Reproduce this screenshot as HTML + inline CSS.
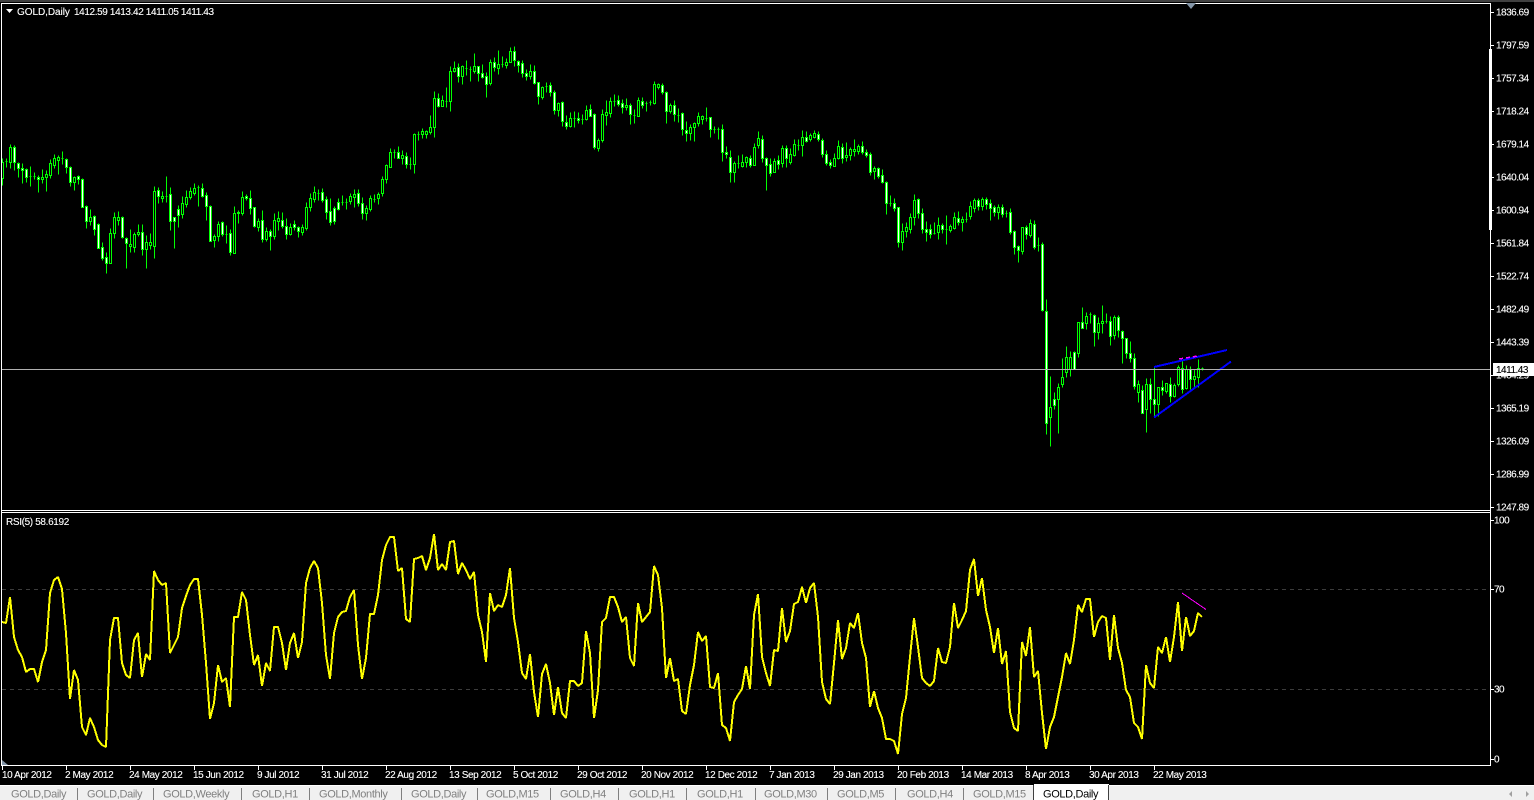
<!DOCTYPE html>
<html><head><meta charset="utf-8"><title>GOLD,Daily</title>
<style>
html,body{margin:0;padding:0;background:#000;width:1534px;height:800px;overflow:hidden}
svg{display:block}
text{font-family:"Liberation Sans",sans-serif;font-size:10px;fill:#fff;stroke:#fff;stroke-width:.12px}
.p{letter-spacing:-.5px}
.t{letter-spacing:-.4px}
.tb{font-size:11px;letter-spacing:-.35px;fill:#808080;stroke:none}
</style></head><body>
<svg width="1534" height="800" viewBox="0 0 1534 800" xmlns="http://www.w3.org/2000/svg">
<rect width="1534" height="800" fill="#000"/>
<rect width="1534" height="2" fill="#404040"/>
<!-- grid -->
<path d="M2 589.5H1490M2 689.5H1490" stroke="#3c3c3c" stroke-dasharray="4 4" fill="none"/>
<!-- candles -->
<g transform="translate(.5 .5)" fill="none" stroke="#00ff00" stroke-width="1">
<path d="M2 158V185M6 158V167M5 161h2M10 144V168M14 145V170M18 162V177M22 163V183M26 168V182M30 166V186M29 176h2M34 172V179M33 176h2M38 175V192M42 169V183M46 170V191M50 159V178M54 154V168M58 155V174M62 151V164M61 158h2M66 158V173M70 166V186M74 176V190M78 175V184M82 178V207M86 205V228M90 209V225M94 215V235M98 223V248M102 242V260M106 252V273M110 228V263M114 212V238M118 211V225M122 216V238M126 237V268M130 229V252M134 232V252M138 224V236M142 224V255M146 235V268M150 233V249M154 186V258M158 187V203M162 191V202M166 176V202M165 196h2M170 187V230M174 217V248M178 205V227M182 196V218M186 190V207M190 187V199M194 183V195M198 185V206M197 187h2M202 183V197M206 192V220M210 205V241M214 234V247M218 221V241M222 221V236M226 225V243M225 234h2M230 229V255M234 206V253M238 210V223M237 212h2M242 191V215M246 194V200M250 190V214M254 207V227M258 218V231M262 210V242M266 227V241M270 229V250M274 213V239M278 211V230M282 212V228M286 218V239M290 223V235M294 220V230M298 226V237"/>
<path d="M302 224V235M306 202V230M310 193V211M314 186V202M318 189V200M317 193h2M322 188V202M326 196V219M330 198V225M334 206V224M338 198V210M342 195V205M341 202h2M346 198V209M345 202h2M350 193V204M354 189V207M358 189V206M362 197V219M366 205V220M370 195V211M374 194V202M373 199h2M378 192V204M382 176V196M386 164V183M390 148V167M394 149V158M393 152h2M398 146V158M402 150V164M406 152V168M410 157V169M409 164h2M414 133V173M418 131V140M417 134h2M422 128V138M426 130V138M430 115V134M434 91V137M438 93V107M442 95V106M446 87V107M445 101h2M450 66V111M454 61V72M458 63V82M462 65V84M466 60V75M465 68h2M470 66V81M469 69h2M474 53V73M478 66V81M482 64V78M486 72V97M490 59V85M494 57V71M498 50V74M502 56V67M501 64h2M506 58V68M510 47V62M514 46V66M518 60V72M522 60V77M526 69V80M530 64V79M534 65V84M538 82V104M542 86V99M546 82V92M545 86h2M550 82V96M554 90V114M558 102V116M562 101V126M566 115V129M570 112V127M574 111V127M573 118h2M578 112V123M582 114V124M581 119h2M586 105V120M590 104V116M594 113V149M598 138V151M602 109V142M606 100V125M610 97V117M614 94V106M613 101h2M618 95V106M622 99V113M626 98V110M630 103V124M634 109V123M633 115h2M638 97V116M642 97V108M646 101V111M645 103h2M650 100V105M649 102h2"/>
<path d="M654 81V104M658 83V89M662 83V94M666 91V123M670 103V113M674 100V121M678 108V122M677 115h2M682 112V135M686 121V141M690 124V140M694 122V141M698 112V126M702 115V124M706 107V121M705 118h2M710 117V137M714 126V133M713 129h2M718 127V139M717 129h2M722 124V161M726 146V158M730 150V182M734 161V182M738 155V168M737 163h2M742 154V167M746 156V167M750 155V167M754 143V165M758 131V148M762 135V162M766 157V190M770 158V176M774 158V172M778 155V169M782 145V167M786 145V167M790 148V164M794 139V156M798 139V150M797 145h2M802 130V156M806 131V142M810 133V141M814 130V138M818 131V141M822 138V157M826 150V165M830 159V168M834 153V166M838 140V159M842 143V163M846 142V161M850 147V160M854 139V156M858 144V154M862 141V154M866 149V157M870 152V175M874 166V179M878 167V178M882 169V183M886 181V214M890 195V206M889 203h2M894 198V211M898 207V247M902 223V250M906 222V237M910 213V233M914 194V225M918 198V218M922 208V233M926 221V241M930 224V238M934 222V234M933 233h2M938 217V239M942 223V233M946 215V244M945 229h2M950 224V232M954 212V229M958 211V225M962 216V231M966 212V222M965 219h2M970 201V219M974 198V212M978 198V210M982 197V210M986 197V209M990 199V220M994 205V216M998 204V219M1002 204V217M1006 210V217M1005 213h2M1010 208V234M1014 230V254M1018 245V262M1022 227V254M1026 225V239M1030 219V237M1034 220V249M1038 237V251M1037 245h2M1042 242V311M1046 299V434M1050 376V446M1054 392V409M1058 383V433M1062 358V387M1066 346V377M1070 351V376M1074 351V369M1078 322V357M1082 307V328M1086 312V329M1090 312V323M1089 314h2M1094 314V346M1098 317V339M1102 305V333M1106 313V323M1105 321h2M1110 316V345M1114 315V339M1118 315V337M1122 330V363M1126 338V358M1130 341V362M1134 353V389M1138 380V402M1142 385V413M1146 378V432M1150 378V413M1154 367V417M1158 387V416M1162 380V395M1166 383V393M1170 377V402M1174 383V397M1178 365V386M1182 361V393M1186 365V389M1190 366V389M1194 369V387M1198 359V387M1202 367V370M1201 368h2"/>
<!-- bull bodies -->
<path fill="#000" d="M1 162h2V178h-2zM9 147h2V162h-2zM41 177h2V179h-2zM45 174h2V177h-2zM49 163h2V175h-2zM53 158h2V165h-2zM57 157h2V160h-2zM73 177h2V182h-2zM89 217h2V221h-2zM109 233h2V263h-2zM113 217h2V233h-2zM117 217h2V220h-2zM129 244h2V246h-2zM133 234h2V247h-2zM137 232h2V234h-2zM145 242h2V249h-2zM149 242h2V245h-2zM153 191h2V246h-2zM161 196h2V198h-2zM181 203h2V214h-2zM185 197h2V204h-2zM189 191h2V197h-2zM193 188h2V193h-2zM213 236h2V240h-2zM217 224h2V236h-2zM233 213h2V253h-2zM237 212h2V213h-2zM241 197h2V213h-2zM257 221h2V227h-2zM265 231h2V239h-2zM273 220h2V236h-2zM277 218h2V221h-2zM289 227h2V234h-2zM301 227h2V232h-2zM305 207h2V228h-2zM309 198h2V207h-2zM313 192h2V199h-2zM349 196h2V201h-2zM353 194h2V197h-2zM365 208h2V213h-2zM369 198h2V209h-2zM377 194h2V198h-2zM381 179h2V193h-2zM385 165h2V179h-2zM389 152h2V167h-2zM401 155h2V158h-2zM413 134h2V164h-2zM421 131h2V134h-2zM425 131h2V134h-2zM429 127h2V132h-2zM433 98h2V127h-2zM441 100h2V106h-2zM449 71h2V101h-2zM453 68h2V71h-2zM461 66h2V76h-2zM473 66h2V71h-2zM489 62h2V83h-2zM497 64h2V68h-2zM505 62h2V65h-2zM509 51h2V62h-2zM529 71h2V76h-2zM541 87h2V97h-2zM557 103h2V110h-2zM569 118h2V126h-2zM585 110h2V119h-2zM597 140h2V148h-2zM601 114h2V140h-2zM605 112h2V115h-2zM609 101h2V113h-2zM625 105h2V107h-2zM637 100h2V116h-2zM653 84h2V103h-2zM657 84h2V87h-2zM669 105h2V111h-2zM689 127h2V133h-2zM693 123h2V127h-2zM697 116h2V123h-2zM701 116h2V119h-2zM733 163h2V172h-2zM741 162h2V166h-2zM745 157h2V162h-2zM753 147h2V165h-2zM757 138h2V145h-2zM773 161h2V172h-2zM781 148h2V163h-2zM789 154h2V162h-2zM793 144h2V155h-2zM801 137h2V145h-2zM809 135h2V139h-2zM813 133h2V137h-2zM833 158h2V166h-2zM837 146h2V158h-2zM845 155h2V157h-2zM849 149h2V155h-2zM853 149h2V151h-2zM857 146h2V151h-2zM873 168h2V171h-2zM901 231h2V242h-2zM905 227h2V231h-2zM909 217h2V229h-2zM913 200h2V217h-2zM937 225h2V232h-2zM949 226h2V230h-2zM953 217h2V228h-2zM961 219h2V222h-2zM969 206h2V216h-2zM973 200h2V208h-2zM981 199h2V206h-2zM997 207h2V212h-2zM1021 227h2V251h-2zM1029 223h2V235h-2zM1049 407h2V417h-2zM1057 387h2V399h-2zM1061 377h2V384h-2zM1065 357h2V372h-2zM1069 357h2V369h-2zM1077 322h2V353h-2zM1085 316h2V323h-2zM1097 323h2V332h-2zM1101 321h2V323h-2zM1113 317h2V335h-2zM1137 384h2V392h-2zM1145 384h2V409h-2zM1157 387h2V404h-2zM1165 383h2V391h-2zM1173 385h2V396h-2zM1177 367h2V384h-2zM1185 369h2V388h-2zM1193 376h2V379h-2zM1197 368h2V377h-2z"/>
<!-- bear bodies -->
<path fill="#fff" d="M13 147h2V162h-2zM17 163h2V168h-2zM21 168h2V170h-2zM25 169h2V177h-2zM37 177h2V179h-2zM65 159h2V167h-2zM69 167h2V182h-2zM77 176h2V179h-2zM81 179h2V207h-2zM85 206h2V221h-2zM93 216h2V229h-2zM97 224h2V248h-2zM101 247h2V258h-2zM105 257h2V263h-2zM121 217h2V237h-2zM125 238h2V243h-2zM141 232h2V249h-2zM157 190h2V196h-2zM169 194h2V221h-2zM173 217h2V221h-2zM177 209h2V215h-2zM201 188h2V196h-2zM205 195h2V206h-2zM209 206h2V241h-2zM221 222h2V234h-2zM229 233h2V252h-2zM245 196h2V198h-2zM249 198h2V208h-2zM253 207h2V226h-2zM261 220h2V239h-2zM269 231h2V236h-2zM281 220h2V226h-2zM285 226h2V234h-2zM293 224h2V227h-2zM297 227h2V231h-2zM321 192h2V200h-2zM325 199h2V212h-2zM329 211h2V222h-2zM333 208h2V221h-2zM337 202h2V209h-2zM357 193h2V203h-2zM361 203h2V213h-2zM397 152h2V158h-2zM405 156h2V164h-2zM437 98h2V106h-2zM457 67h2V76h-2zM477 66h2V73h-2zM481 73h2V77h-2zM485 76h2V84h-2zM493 62h2V67h-2zM513 51h2V60h-2zM517 61h2V65h-2zM521 63h2V73h-2zM525 73h2V76h-2zM533 71h2V83h-2zM537 82h2V96h-2zM549 85h2V92h-2zM553 92h2V110h-2zM561 102h2V121h-2zM565 122h2V126h-2zM577 118h2V120h-2zM589 109h2V116h-2zM593 114h2V147h-2zM617 100h2V104h-2zM621 103h2V107h-2zM629 105h2V114h-2zM641 101h2V105h-2zM661 85h2V92h-2zM665 92h2V111h-2zM673 105h2V114h-2zM681 113h2V129h-2zM685 130h2V133h-2zM709 117h2V129h-2zM721 129h2V152h-2zM725 152h2V154h-2zM729 157h2V172h-2zM749 158h2V165h-2zM761 139h2V158h-2zM765 158h2V165h-2zM769 164h2V173h-2zM777 160h2V164h-2zM785 148h2V158h-2zM805 137h2V141h-2zM817 134h2V139h-2zM821 140h2V154h-2zM825 154h2V163h-2zM829 162h2V165h-2zM841 147h2V158h-2zM861 146h2V152h-2zM865 152h2V155h-2zM869 154h2V172h-2zM877 168h2V176h-2zM881 175h2V182h-2zM885 182h2V203h-2zM893 203h2V208h-2zM897 207h2V242h-2zM917 199h2V213h-2zM921 213h2V229h-2zM925 229h2V232h-2zM929 229h2V234h-2zM941 225h2V229h-2zM957 218h2V222h-2zM977 200h2V206h-2zM985 199h2V204h-2zM989 203h2V208h-2zM993 207h2V212h-2zM1001 207h2V214h-2zM1009 212h2V232h-2zM1013 231h2V247h-2zM1017 246h2V250h-2zM1025 227h2V234h-2zM1033 224h2V247h-2zM1041 244h2V310h-2zM1045 311h2V423h-2zM1053 399h2V405h-2zM1073 352h2V369h-2zM1081 322h2V328h-2zM1093 315h2V332h-2zM1109 321h2V336h-2zM1117 317h2V330h-2zM1121 331h2V338h-2zM1125 338h2V353h-2zM1129 353h2V358h-2zM1133 358h2V386h-2zM1141 390h2V413h-2zM1149 384h2V399h-2zM1153 399h2V404h-2zM1161 387h2V390h-2zM1169 384h2V396h-2zM1181 368h2V389h-2zM1189 369h2V379h-2z"/>
</g>
<!-- objects -->
<path d="M1154 367L1227 350M1154 417.500L1231 361.500" stroke="#0000ff" stroke-width="2" fill="none" shape-rendering="crispEdges"/>
<path d="M1179 359L1198 356" stroke="#ff00ff" stroke-width="1.500" stroke-dasharray="4 3" fill="none" shape-rendering="crispEdges"/>
<!-- bid line -->
<rect x="2" y="369" width="1488" height="1" fill="#b0b0b0"/>
<!-- frames -->
<g fill="#fff">
<rect x="1" y="3" width="1490" height="1"/>
<rect x="1" y="3" width="1" height="763"/>
<rect x="1490" y="3" width="1" height="763"/>
<rect x="1489" y="49" width="3" height="181"/>
<rect x="1" y="510" width="1490" height="1"/>
<rect x="1" y="512" width="1490" height="1"/>
<rect x="1" y="765" width="1490" height="1"/>
</g>
<path d="M1186 3h10l-5 6z" fill="#8496a8"/>
<path d="M2 760l6 5h-6z" fill="#8496a8"/>
<path d="M6 9h7l-3.500 4z" fill="#fff"/>
<!-- RSI -->
<polyline fill="none" stroke="#ffff00" stroke-width="2" stroke-linejoin="bevel" shape-rendering="crispEdges" points="2,622 6,623 10,597 14,637 18,650 22,657 26,672 30,669 34,669 38,682 42,662 46,650 50,593 54,580 58,577 62,589 66,633 70,699 74,670 78,680 82,727 86,735 90,718 94,727 98,740 102,745 106,747 110,640 114,618 118,618 122,663 126,675 130,678 134,640 138,633 142,677 146,654 150,660 154,571 158,580 162,585 166,583 170,653 174,645 178,637 182,608 186,596 190,585 194,579 198,579 202,615 206,663 210,719 214,703 218,665 222,682 226,678 230,707 234,617 238,617 242,592 246,600 250,635 254,665 258,655 262,686 266,663 270,671 274,627 278,627 282,643 286,670 290,643 294,633 298,658 302,642 306,583 310,568 314,561 318,568 322,603 326,655 330,679 334,633 338,617 342,612 346,611 350,597 354,590 358,645 362,679 366,658 370,614 374,614 378,595 382,560 386,545 390,537 394,537 398,571 402,568 406,619 410,622 414,559 418,558 422,556 426,570 430,558 434,534 438,570 442,564 446,570 450,542 454,541 458,574 462,563 466,570 470,579 474,572 478,615 482,632 486,662 490,593 494,611 498,605 502,607 506,595 510,568 514,618 518,642 522,673 526,679 530,654 534,692 538,717 542,674 546,664 550,683 554,715 558,687 562,713 566,718 570,681 574,681 578,686 582,683 586,631 590,653 594,718 598,690 602,622 606,618 610,597 614,597 618,607 622,622 626,617 630,658 634,666 638,603 642,622 646,617 650,612 654,566 658,575 662,608 666,678 670,658 674,681 678,679 682,711 686,714 690,685 694,665 698,632 702,641 706,636 710,687 714,688 718,673 722,725 726,728 730,741 734,702 738,695 742,689 746,666 750,689 754,615 758,594 762,657 766,673 770,686 774,650 778,651 782,608 786,642 790,631 794,604 798,602 802,587 806,603 810,588 814,583 818,617 822,682 826,699 830,704 834,663 838,620 842,659 846,648 850,623 854,628 858,613 862,643 866,658 870,707 874,691 878,708 882,718 886,739 890,739 894,741 898,754 902,714 906,698 910,657 914,618 918,647 922,678 926,683 930,686 934,681 938,648 942,662 946,663 950,647 954,603 958,628 962,620 966,611 970,570 974,559 978,596 982,578 986,610 990,627 994,653 998,628 1002,664 1006,651 1010,712 1014,728 1018,731 1022,642 1026,656 1030,627 1034,677 1038,671 1042,713 1046,749 1050,727 1054,717 1058,697 1062,677 1066,653 1070,664 1074,640 1078,605 1082,612 1086,599 1090,599 1094,637 1098,622 1102,616 1106,618 1110,660 1114,615 1118,648 1122,663 1126,690 1130,697 1134,723 1138,727 1142,739 1146,665 1150,683 1154,688 1158,647 1162,653 1166,637 1170,662 1174,637 1178,602 1182,651 1186,617 1190,636 1194,631 1198,613 1202,617"/>
<path d="M1182 593L1206 609.500" stroke="#ff00ff" stroke-width="1" fill="none" shape-rendering="crispEdges"/>
<!-- legends -->
<text x="17" y="15" style="letter-spacing:-.05px">GOLD,Daily</text>
<text x="74" y="15" style="letter-spacing:-.38px">1412.59 1413.42 1411.05 1411.43</text>
<text x="6" y="525" style="letter-spacing:-.35px">RSI(5) 58.6192</text>
<!-- price axis -->
<path d="M1491 12.500h3M1491 45.500h3M1491 78.500h3M1491 111.500h3M1491 144.500h3M1491 177.500h3M1491 210.500h3M1491 243.500h3M1491 276.500h3M1491 309.500h3M1491 342.500h3M1491 375.500h3M1491 408.500h3M1491 441.500h3M1491 474.500h3M1491 507.500h3M1491 520.500h3M1491 589.500h3M1491 689.500h3M1491 759.500h3" stroke="#fff" fill="none"/>
<g class="p">
<text class="p" x="1496" y="15.500">1836.69</text>
<text class="p" x="1496" y="48.500">1797.59</text>
<text class="p" x="1496" y="81.500">1757.34</text>
<text class="p" x="1496" y="114.500">1718.24</text>
<text class="p" x="1496" y="147.500">1679.14</text>
<text class="p" x="1496" y="180.500">1640.04</text>
<text class="p" x="1496" y="213.500">1600.94</text>
<text class="p" x="1496" y="246.500">1561.84</text>
<text class="p" x="1496" y="279.500">1522.74</text>
<text class="p" x="1496" y="312.500">1482.49</text>
<text class="p" x="1496" y="345.500">1443.39</text>
<text class="p" x="1496" y="378.500">1404.29</text>
<text class="p" x="1496" y="411.500">1365.19</text>
<text class="p" x="1496" y="444.500">1326.09</text>
<text class="p" x="1496" y="477.500">1286.99</text>
<text class="p" x="1496" y="510.500">1247.89</text>
</g>
<rect x="1493" y="363" width="41" height="13" fill="#fff"/>
<text class="p" x="1496" y="373" style="fill:#000;stroke:#000">1411.43</text>
<text class="p" x="1494" y="523.500">100</text>
<text class="p" x="1494" y="592.500">70</text>
<text class="p" x="1494" y="692.500">30</text>
<text class="p" x="1494" y="762.500">0</text>
<!-- time axis -->
<path d="M2.500 766v4M66.500 766v4M130.500 766v4M194.500 766v4M258.500 766v4M322.500 766v4M386.500 766v4M450.500 766v4M514.500 766v4M578.500 766v4M642.500 766v4M706.500 766v4M770.500 766v4M834.500 766v4M898.500 766v4M962.500 766v4M1026.500 766v4M1090.500 766v4M1154.500 766v4" stroke="#fff" fill="none"/>
<g>
<text class="t" x="2" y="778">10 Apr 2012</text>
<text class="t" x="65" y="778">2 May 2012</text>
<text class="t" x="129" y="778">24 May 2012</text>
<text class="t" x="193" y="778">15 Jun 2012</text>
<text class="t" x="257" y="778">9 Jul 2012</text>
<text class="t" x="321" y="778">31 Jul 2012</text>
<text class="t" x="385" y="778">22 Aug 2012</text>
<text class="t" x="449" y="778">13 Sep 2012</text>
<text class="t" x="513" y="778">5 Oct 2012</text>
<text class="t" x="577" y="778">29 Oct 2012</text>
<text class="t" x="641" y="778">20 Nov 2012</text>
<text class="t" x="705" y="778">12 Dec 2012</text>
<text class="t" x="769" y="778">7 Jan 2013</text>
<text class="t" x="833" y="778">29 Jan 2013</text>
<text class="t" x="897" y="778">20 Feb 2013</text>
<text class="t" x="961" y="778">14 Mar 2013</text>
<text class="t" x="1025" y="778">8 Apr 2013</text>
<text class="t" x="1089" y="778">30 Apr 2013</text>
<text class="t" x="1153" y="778">22 May 2013</text>
</g>
<!-- tabs -->
<rect x="0" y="785" width="1534" height="15" fill="#f0f0f0"/>
<rect x="0" y="785" width="1534" height="1" fill="#fff"/>
<path d="M77.500 788V800M153.500 788V800M241.500 788V800M309.500 788V800M401.500 788V800M477.500 788V800M550.500 788V800M618.500 788V800M686.500 788V800M755.500 788V800M827.500 788V800M895.500 788V800M963.500 788V800" stroke="#808080" fill="none"/>
<rect x="1034" y="784" width="75" height="16" fill="#fff"/>
<path d="M1033.500 785V800M1108.500 785V800" stroke="#404040" fill="none"/>
<text class="tb" x="11" y="797.500">GOLD,Daily</text>
<text class="tb" x="87" y="797.500">GOLD,Daily</text>
<text class="tb" x="163" y="797.500">GOLD,Weekly</text>
<text class="tb" x="252" y="797.500">GOLD,H1</text>
<text class="tb" x="319" y="797.500">GOLD,Monthly</text>
<text class="tb" x="411" y="797.500">GOLD,Daily</text>
<text class="tb" x="486" y="797.500">GOLD,M15</text>
<text class="tb" x="560" y="797.500">GOLD,H4</text>
<text class="tb" x="629" y="797.500">GOLD,H1</text>
<text class="tb" x="697" y="797.500">GOLD,H1</text>
<text class="tb" x="764" y="797.500">GOLD,M30</text>
<text class="tb" x="837" y="797.500">GOLD,M5</text>
<text class="tb" x="907" y="797.500">GOLD,H4</text>
<text class="tb" x="973" y="797.500">GOLD,M15</text>
<text class="tb" x="1043" y="797.500" style="fill:#000">GOLD,Daily</text>
<path d="M1512 791v6l-3-3zM1526 791v6l3-3z" fill="#a0a0a0"/>
</svg>
</body></html>
